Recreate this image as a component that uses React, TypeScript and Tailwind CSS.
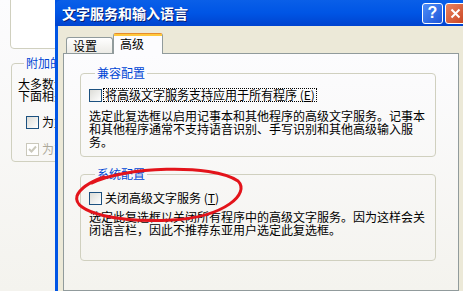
const cjk = "font-['SimSun','Noto_Sans_CJK_SC',sans-serif]";

function Checkbox({ disabled, checked }: { disabled?: boolean; checked?: boolean }) {
  return (
    <span
      className={
        "flex h-[13px] w-[13px] shrink-0 items-center justify-center border " +
        (disabled
          ? "border-[#cac8bb] bg-white"
          : "border-[#1c5180] bg-gradient-to-br from-[#dcdcd7] to-white")
      }
    >
      {checked && (
        <svg width="9" height="9" viewBox="0 0 9 9">
          <path d="M1 4 L3.5 6.5 L8 1.5" fill="none" stroke="#cac8bb" strokeWidth="2" />
        </svg>
      )}
    </span>
  );
}

function GroupBox({
  title,
  className,
  children,
}: {
  title: string;
  className?: string;
  children: React.ReactNode;
}) {
  return (
    <fieldset className={"rounded-[4px] border border-[#d0d0bf] " + (className ?? "")}>
      <legend className="ml-[6px] px-[2px] text-[12px] leading-[14px] text-[#0046d5]">{title}</legend>
      {children}
    </fieldset>
  );
}

function BackWindow() {
  return (
    <div className="h-full w-[55px] shrink-0 overflow-hidden bg-gradient-to-b from-[#fcfcfe] to-[#f4f3ee]">
      <div className="w-[220px]">
        <div className="ml-[10px] mt-[-10px] h-[59px] rounded-[4px] border border-[#d0d0bf] bg-white" />
        <GroupBox title="附加的语言服务" className="ml-[11px] mt-[7px] h-[106px] pl-[6px]">
          <div className="mt-[8px] text-[12px] leading-[12px] text-black">
            <p>大多数语言都提供了</p>
            <p>下面相关的服务</p>
          </div>
          <div className="ml-[8px] mt-[11px] flex items-center gap-[3px] text-[12px]">
            <Checkbox />
            <span>为复杂文字</span>
          </div>
          <div className="ml-[8px] mt-[9px] flex items-center gap-[3px] text-[12px] text-[#aca899]">
            <Checkbox disabled checked />
            <span>为东亚语言</span>
          </div>
        </GroupBox>
      </div>
    </div>
  );
}

function TitleBar() {
  return (
    <div className="flex h-[26px] items-center rounded-tl-[7px] rounded-tr-[7px] bg-gradient-to-b from-[#0a5fe8] via-[#0055e5] to-[#0043cf] pl-[7px] pr-[2px]">
      <span className="flex-1 text-[14px] font-bold leading-[14px] text-white [text-shadow:1px_1px_0_#0a1e72]">
        文字服务和输入语言
      </span>
      <div className="flex gap-[2px]">
        <span className="flex h-[21px] w-[21px] items-center justify-center rounded-[3px] border border-white bg-gradient-to-br from-[#4f8ef8] to-[#1e55d8] text-[16px] font-bold leading-none text-white font-['Liberation_Sans',sans-serif]">
          ?
        </span>
        <span className="flex h-[21px] w-[21px] items-center justify-center rounded-[3px] border border-white bg-gradient-to-br from-[#e9835f] to-[#c9421e]">
          <svg width="11" height="11" viewBox="0 0 11 11">
            <path d="M1.5 1.5 L9.5 9.5 M9.5 1.5 L1.5 9.5" stroke="white" strokeWidth="2" />
          </svg>
        </span>
      </div>
    </div>
  );
}

function Dialog() {
  return (
    <div className="flex h-full w-[413px] shrink-0 flex-col bg-[#0055e5]">
      <TitleBar />
      <div className="ml-[3px] mr-[3px] flex flex-1 flex-col bg-[#ece9d8] pl-[5px] pr-[6px] pt-[7px]">
        <div className="relative z-10 flex h-[20px] items-end pl-[3px]">
          <div className="flex h-[16px] w-[47px] items-center rounded-t-[3px] border border-b-0 border-[#919b9c] bg-gradient-to-b from-white to-[#ecebe6] pl-[6px] text-[12px] leading-[12px]">
            设置
          </div>
          <div className="-mb-px flex h-[21px] w-[50px] flex-col rounded-t-[3px] border border-b-0 border-[#919b9c] border-t-[#e68b2c] bg-[#fcfcfe]">
            <div className="h-[2px] bg-[#ffc83c]" />
            <span className="pl-[6px] pt-[1px] text-[12px] leading-[14px]">高级</span>
          </div>
        </div>
        <div className="flex-1 border border-[#919b9c] bg-gradient-to-b from-[#fcfcfe] to-[#f4f3ee] pl-[16px] pt-[12px]">
          <GroupBox title="兼容配置" className="w-[356px] pb-[8px] pl-[8px]">
            <div className="mt-[8px] flex h-[14px] items-center">
              <Checkbox />
              <span className="ml-[1px] border border-dotted border-black px-[1px] text-[12px] leading-[12px]">
                将高级文字服务支持应用于所有程序 (<span className="underline">E</span>)
              </span>
            </div>
            <div className="mt-[7px] whitespace-nowrap text-[12px] leading-[13px]">
              <p>选定此复选框以启用记事本和其他程序的高级文字服务。记事本</p>
              <p>和其他程序通常不支持语音识别、手写识别和其他高级输入服</p>
              <p>务。</p>
            </div>
          </GroupBox>
          <GroupBox title="系统配置" className="mt-[10px] w-[356px] pb-[24px] pl-[8px]">
            <div className="mt-[10px] flex h-[14px] items-center">
              <Checkbox />
              <span className="ml-[3px] text-[12px] leading-[12px]">
                关闭高级文字服务 (<span className="underline">T</span>)
              </span>
            </div>
            <div className="mt-[5px] whitespace-nowrap text-[12px] leading-[13px]">
              <p>选定此复选框以关闭所有程序中的高级文字服务。因为这样会关</p>
              <p>闭语言栏，因此不推荐东亚用户选定此复选框。</p>
            </div>
          </GroupBox>
        </div>
      </div>
    </div>
  );
}

export default function App() {
  return (
    <div className={"relative flex h-[291px] w-[463px] overflow-hidden text-black " + cjk}>
      <BackWindow />
      <Dialog />
      <svg className="pointer-events-none absolute left-0 top-0" width="463" height="291">
        <path
          d="M92 183 C122 167 212 163 238 181 C250 193 226 217 172 220 C120 223 72 213 77 196 C80 188 90 182 104 177"
          fill="none"
          stroke="#e3141b"
          strokeWidth="3"
          strokeLinecap="round"
        />
      </svg>
    </div>
  );
}
